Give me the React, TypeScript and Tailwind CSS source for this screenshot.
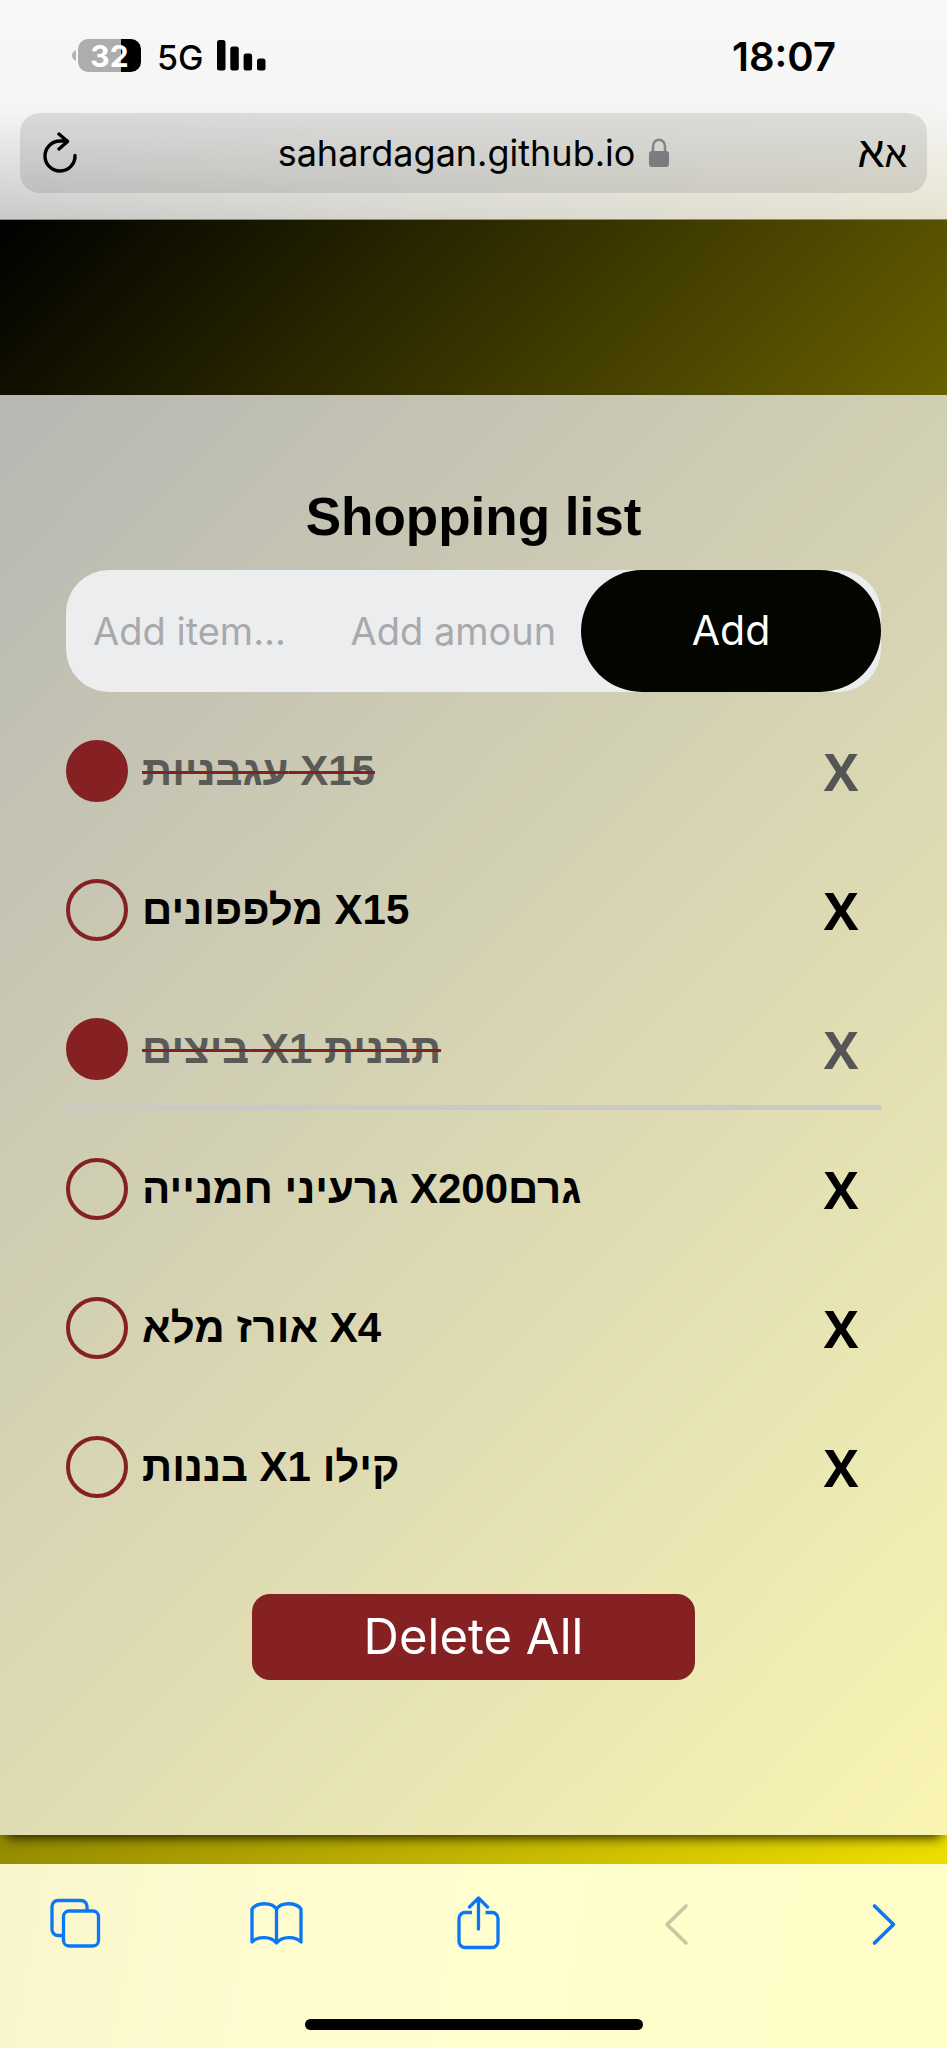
import { useState } from 'react';

type Item = { id: number; text: string; done: boolean; divided?: boolean };

const initialItems: Item[] = [
  { id: 1, text: 'עגבניות X15', done: true },
  { id: 2, text: 'מלפפונים X15', done: false },
  { id: 3, text: 'ביצים X1 תבנית', done: true, divided: true },
  { id: 4, text: 'גרעיני חמנייה X200גרם', done: false },
  { id: 5, text: 'אורז מלא X4', done: false },
  { id: 6, text: 'בננות X1 קילו', done: false },
];

function StatusBar() {
  return (
    <div className="flex h-[113px] items-start justify-between pt-[38px] pr-[111px] pl-[72px]">
      <div className="flex h-[35px] items-center">
        <svg width="5" height="13" viewBox="0 0 5 13" aria-hidden="true">
          <path d="M4 1C1.500 2 0 4 0 6.500S1.500 11 4 12z" fill="#b4b4b4" />
        </svg>
        <div className="ml-px flex h-[33px] w-[63px] items-center justify-center rounded-[10px] bg-[linear-gradient(to_right,#adadad_68%,#000_68%)] text-[30px] leading-none font-bold text-white">
          32
        </div>
        <span className="ml-4 pt-1 text-[34px] leading-[34px] font-medium">5G</span>
        <svg className="ml-[14px]" width="49" height="31" viewBox="0 0 49 31" aria-label="Signal">
          <rect x="0" y="0" width="8.500" height="30.500" rx="2.500" />
          <rect x="13.300" y="6.500" width="8.500" height="24" rx="2.500" />
          <rect x="26.600" y="13.500" width="8.500" height="17" rx="2.500" />
          <rect x="40" y="18.500" width="8.500" height="12" rx="2.500" />
        </svg>
      </div>
      <time className="text-[40px] leading-[38px] font-semibold">18:07</time>
    </div>
  );
}

function AddressBar() {
  return (
    <div className="px-5 pb-[26px]">
      <div className="grid h-20 grid-cols-[1fr_auto_1fr] items-center rounded-[20px] bg-black/10 px-5">
        <button type="button" aria-label="Reload" className="justify-self-start pl-[3px]">
          <svg width="34" height="42" viewBox="0 0 34 42" fill="none" stroke="#000" strokeWidth="3.400" strokeLinecap="round" strokeLinejoin="round">
            <path d="M32 23.500A15 15 0 1 1 17 9H24" />
            <path d="M16 2L24.500 9.500L16 17" />
          </svg>
        </button>
        <div className="flex items-center gap-[14px]">
          <span className="text-[36px] leading-[48px]">sahardagan.github.io</span>
          <svg width="20" height="30" viewBox="0 0 20 30" aria-label="Secure">
            <path d="M4 14V8.500a6 6.800 0 0 1 12 0V14" fill="none" stroke="#858587" strokeWidth="2.600" />
            <rect x="0" y="13" width="20" height="16" rx="3" fill="#7c7c7e" />
          </svg>
        </div>
        <button type="button" aria-label="Text size" className="justify-self-end font-['Liberation_Sans',Arial,sans-serif]">
          <span dir="rtl">
            <span className="text-[36px] leading-[48px]">א</span>
            <span className="text-[43px] leading-[48px]">א</span>
          </span>
        </button>
      </div>
    </div>
  );
}

function Toolbar() {
  const cell = 'flex h-[54px] w-[54px] items-center justify-center';
  return (
    <nav className="bg-[linear-gradient(100deg,#faf6cc_0%,#fffdd0_35%,#ffffcc_60%,#fffec8_100%)] pb-[18px]">
      <div className="flex justify-between pt-8 pr-9 pl-12">
        <button type="button" aria-label="Tabs" className={cell}>
          <svg width="54" height="54" viewBox="0 0 54 54" fill="none" stroke="#0a78f5" strokeWidth="3.300" strokeLinejoin="round">
            <path d="M15 39.500H10a6 6 0 0 1-6-6V10.500a6 6 0 0 1 6-6H33a6 6 0 0 1 6 6v5" />
            <rect x="15.500" y="15" width="35" height="35" rx="5.500" />
          </svg>
        </button>
        <button type="button" aria-label="Bookmarks" className={cell}>
          <svg width="54" height="54" viewBox="0 0 54 54" fill="none" stroke="#0a78f5" strokeWidth="3.300" strokeLinejoin="round" strokeLinecap="round">
            <path d="M26.500 13C22 6 7 6 2 13V46C7.500 40 21 40 26.500 47C32 40 45.500 40 51 46V13C46 6 31 6 26.500 13V46.500" />
          </svg>
        </button>
        <button type="button" aria-label="Share" className={cell}>
          <svg width="54" height="54" viewBox="0 0 54 54" fill="none" stroke="#0a78f5" strokeWidth="3.300" strokeLinejoin="round" strokeLinecap="round">
            <path d="M19 16.500H12a6 6 0 0 0-6 6V45.500a6 6 0 0 0 6 6H39a6 6 0 0 0 6-6V22.500a6 6 0 0 0-6-6H32.500" strokeLinecap="butt" />
            <path d="M25.500 33V2M16.500 11L25.500 2L34.500 11" />
          </svg>
        </button>
        <button type="button" aria-label="Back" disabled className={cell}>
          <svg width="54" height="54" viewBox="0 0 54 54" fill="none" stroke="#c8c5a2" strokeWidth="3.600" strokeLinejoin="round" strokeLinecap="round">
            <path d="M31 10L12 28.500L31 47" />
          </svg>
        </button>
        <button type="button" aria-label="Forward" className={cell}>
          <svg width="54" height="54" viewBox="0 0 54 54" fill="none" stroke="#0a78f5" strokeWidth="3.600" strokeLinejoin="round" strokeLinecap="round">
            <path d="M17.500 10L36.500 28.500L17.500 47" />
          </svg>
        </button>
      </div>
      <div className="mx-auto mt-[69px] h-[11px] w-[338px] rounded-full bg-black" />
    </nav>
  );
}

export default function App() {
  const [items, setItems] = useState<Item[]>(initialItems);
  const [name, setName] = useState('');
  const [amount, setAmount] = useState('');

  const toggle = (id: number) =>
    setItems(items.map((item) => (item.id === id ? { ...item, done: !item.done } : item)));

  const add = () => {
    if (!name) return;
    setItems([...items, { id: Date.now(), text: `${name} X${amount || 1}`, done: false }]);
    setName('');
    setAmount('');
  };

  return (
    <div className="flex min-h-screen flex-col font-['Inter','Liberation_Sans',sans-serif] text-black">
      <header className="border-b border-[#8a8a80] bg-[linear-gradient(to_bottom,#f8f8f8_0%,#f5f5f4_50%,transparent_115%),linear-gradient(to_right,#bcbcbc,#d0cfc4_50%,#e2dec4)]">
        <StatusBar />
        <AddressBar />
      </header>

      <div className="flex flex-1 flex-col bg-[linear-gradient(135deg,#000_0%,#ffee00_100%)]">
        <main className="flex-1 pt-[175px] pb-7">
          <section className="flex flex-col bg-white/70 px-[66px] pt-[92px] pb-[155px] shadow-[0_8px_12px_-6px_rgba(0,0,0,0.9)]">
            <h1 className="text-center font-['Liberation_Sans',Arial,sans-serif] text-[53px] leading-[60px] font-bold">
              Shopping list
            </h1>

            <form
              className="mt-[23px] flex h-[122px] rounded-[43px] bg-[#ecedef]"
              onSubmit={(e) => {
                e.preventDefault();
                add();
              }}
            >
              <input
                type="text"
                aria-label="Item"
                placeholder="Add item..."
                value={name}
                onChange={(e) => setName(e.target.value)}
                className="w-0 flex-1 bg-transparent px-[27px] text-[38px] outline-none placeholder:text-[#a9a9ab]"
              />
              <input
                type="text"
                aria-label="Amount"
                placeholder="Add amount..."
                value={amount}
                onChange={(e) => setAmount(e.target.value)}
                className="w-0 flex-1 bg-transparent px-[27px] text-[38px] outline-none placeholder:text-[#a9a9ab]"
              />
              <button type="submit" className="w-[300px] rounded-[61px] bg-[#030600] text-[41px] text-white">
                Add
              </button>
            </form>

            <ul className="mt-12 font-['Liberation_Sans',Arial,sans-serif]">
              {items.map((item) => (
                <li
                  key={item.id}
                  className={
                    item.divided
                      ? 'mb-12 flex border-b-[5px] border-[#c9c9c9] pb-[25px]'
                      : 'flex pb-[77px] last:pb-0'
                  }
                >
                  <input
                    id={`item-${item.id}`}
                    type="checkbox"
                    checked={item.done}
                    onChange={() => toggle(item.id)}
                    className="size-[62px] shrink-0 appearance-none rounded-full border-4 border-[#852122] checked:bg-[#852122]"
                  />
                  <label
                    htmlFor={`item-${item.id}`}
                    className={
                      item.done
                        ? 'ml-[14px] text-[42px] leading-[62px] font-bold text-[#5a5a57] line-through decoration-[#852122] decoration-[3px]'
                        : 'ml-[14px] text-[42px] leading-[62px] font-bold'
                    }
                  >
                    {item.text}
                  </label>
                  <button
                    type="button"
                    aria-label={`Remove ${item.text}`}
                    onClick={() => setItems(items.filter((other) => other.id !== item.id))}
                    className={
                      item.done
                        ? "ml-auto h-[62px] w-20 font-['Open_Sans','Noto_Sans',sans-serif] text-[52px] leading-[60px] font-bold text-[#555]"
                        : "ml-auto h-[62px] w-20 font-['Open_Sans','Noto_Sans',sans-serif] text-[52px] leading-[60px] font-bold"
                    }
                  >
                    X
                  </button>
                </li>
              ))}
            </ul>

            <button
              type="button"
              onClick={() => setItems([])}
              className="mt-24 h-[86px] w-[443px] self-center rounded-[18px] bg-[#852122] text-[49px] leading-[60px] text-white"
            >
              Delete All
            </button>
          </section>
        </main>
        <Toolbar />
      </div>
    </div>
  );
}
